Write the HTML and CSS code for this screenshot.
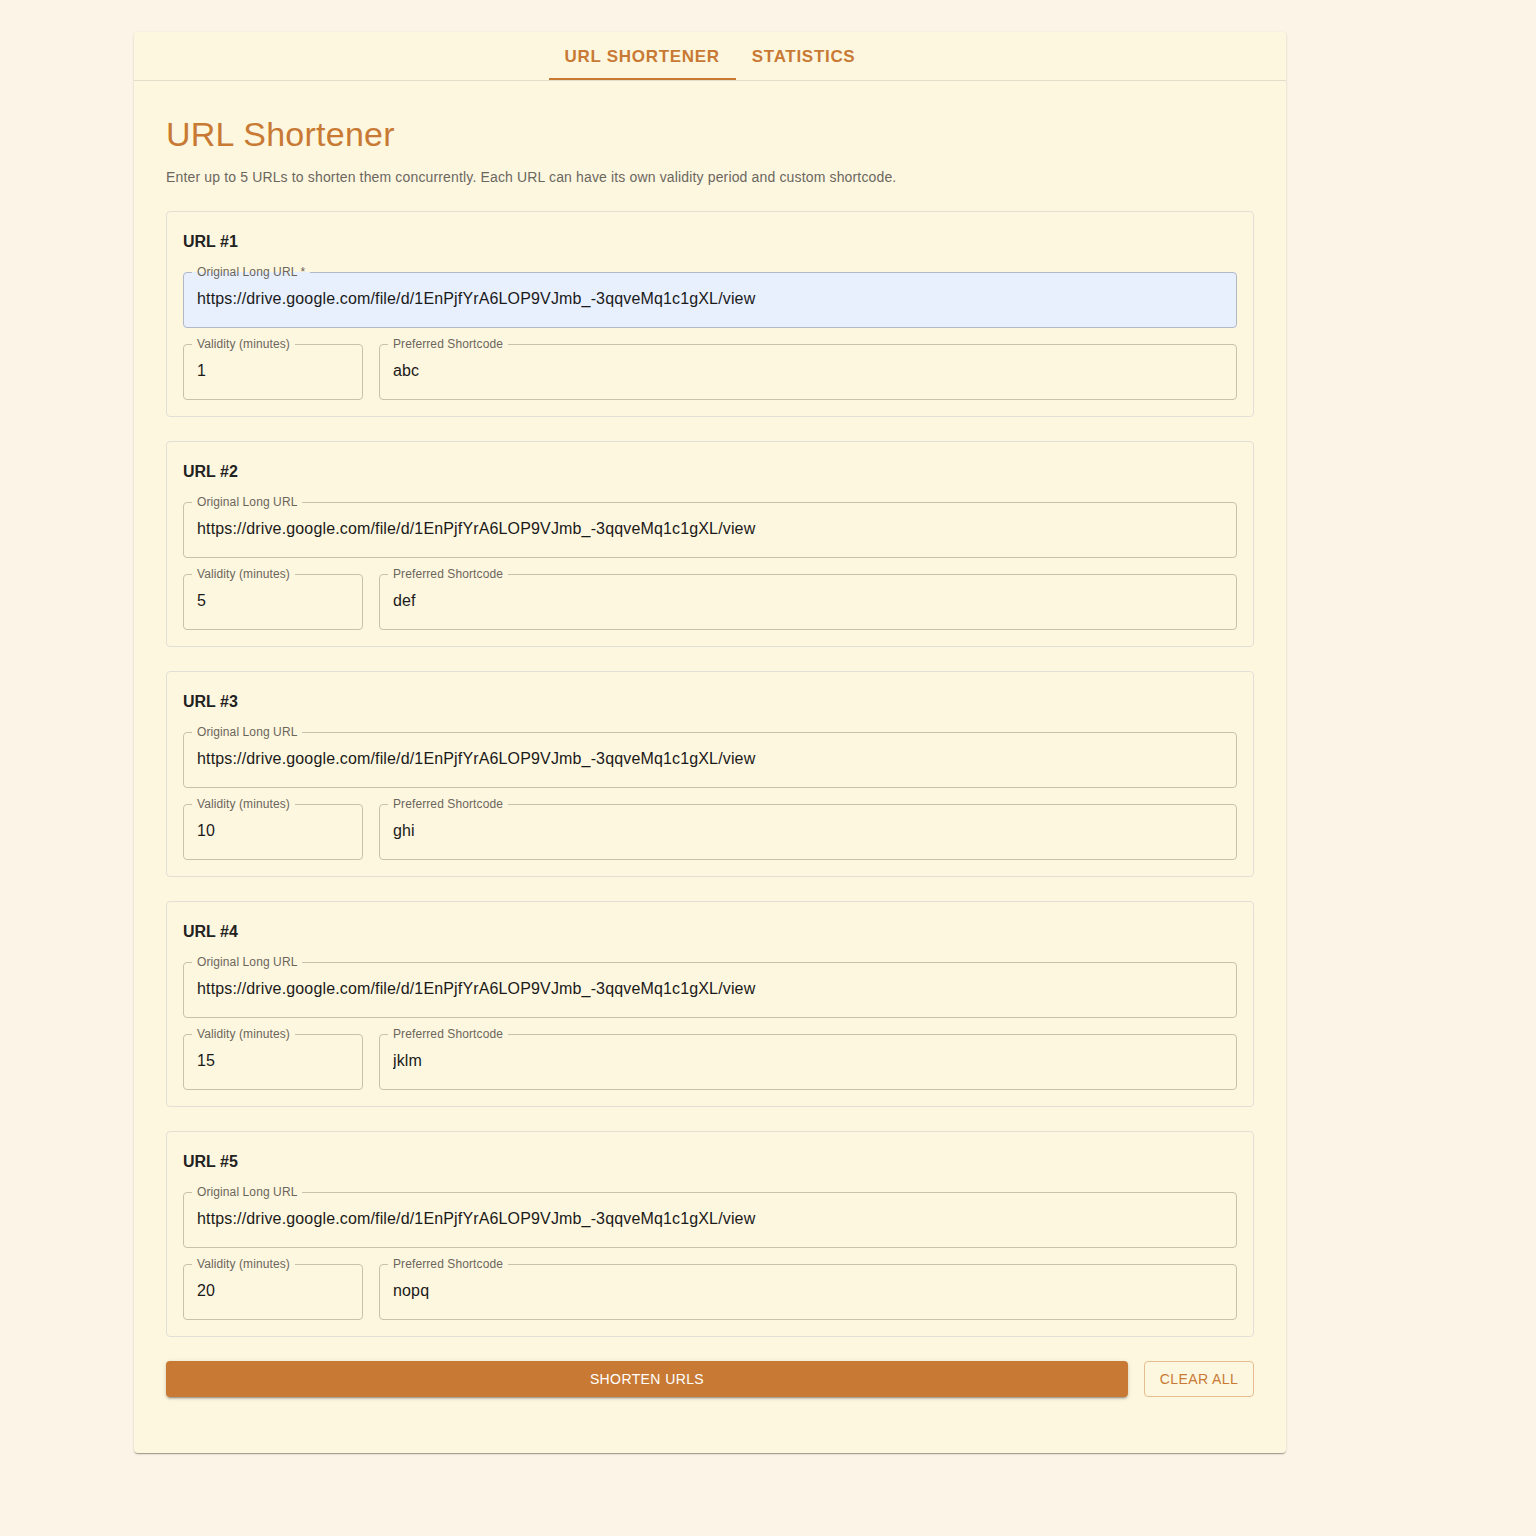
FILE: index.html
```html
<!DOCTYPE html>
<html lang="en">
<head>
<meta charset="utf-8">
<title>URL Shortener</title>
<link rel="stylesheet" href="styles.css">
</head>
<body>
<div class="page">
  <div class="card">
    <nav class="tabs">
      <div class="tab active">URL SHORTENER</div>
      <div class="tab">STATISTICS</div>
    </nav>
    <main class="content">
      <h1 class="title">URL Shortener</h1>
      <p class="desc">Enter up to 5 URLs to shorten them concurrently. Each URL can have its own validity period and custom shortcode.</p>

      <section class="entry">
        <h2 class="entry-title">URL #1</h2>
        <fieldset class="field autofill"><legend>Original Long URL *</legend><input class="input" value="https://drive.google.com/file/d/1EnPjfYrA6LOP9VJmb_-3qqveMq1c1gXL/view"></fieldset>
        <div class="row">
          <fieldset class="field small"><legend>Validity (minutes)</legend><input class="input" value="1"></fieldset>
          <fieldset class="field grow"><legend>Preferred Shortcode</legend><input class="input" value="abc"></fieldset>
        </div>
      </section>

      <section class="entry">
        <h2 class="entry-title">URL #2</h2>
        <fieldset class="field"><legend>Original Long URL</legend><input class="input" value="https://drive.google.com/file/d/1EnPjfYrA6LOP9VJmb_-3qqveMq1c1gXL/view"></fieldset>
        <div class="row">
          <fieldset class="field small"><legend>Validity (minutes)</legend><input class="input" value="5"></fieldset>
          <fieldset class="field grow"><legend>Preferred Shortcode</legend><input class="input" value="def"></fieldset>
        </div>
      </section>

      <section class="entry">
        <h2 class="entry-title">URL #3</h2>
        <fieldset class="field"><legend>Original Long URL</legend><input class="input" value="https://drive.google.com/file/d/1EnPjfYrA6LOP9VJmb_-3qqveMq1c1gXL/view"></fieldset>
        <div class="row">
          <fieldset class="field small"><legend>Validity (minutes)</legend><input class="input" value="10"></fieldset>
          <fieldset class="field grow"><legend>Preferred Shortcode</legend><input class="input" value="ghi"></fieldset>
        </div>
      </section>

      <section class="entry">
        <h2 class="entry-title">URL #4</h2>
        <fieldset class="field"><legend>Original Long URL</legend><input class="input" value="https://drive.google.com/file/d/1EnPjfYrA6LOP9VJmb_-3qqveMq1c1gXL/view"></fieldset>
        <div class="row">
          <fieldset class="field small"><legend>Validity (minutes)</legend><input class="input" value="15"></fieldset>
          <fieldset class="field grow"><legend>Preferred Shortcode</legend><input class="input" value="jklm"></fieldset>
        </div>
      </section>

      <section class="entry">
        <h2 class="entry-title">URL #5</h2>
        <fieldset class="field"><legend>Original Long URL</legend><input class="input" value="https://drive.google.com/file/d/1EnPjfYrA6LOP9VJmb_-3qqveMq1c1gXL/view"></fieldset>
        <div class="row">
          <fieldset class="field small"><legend>Validity (minutes)</legend><input class="input" value="20"></fieldset>
          <fieldset class="field grow"><legend>Preferred Shortcode</legend><input class="input" value="nopq"></fieldset>
        </div>
      </section>

      <div class="actions">
        <button class="btn primary">SHORTEN URLS</button>
        <button class="btn outline">CLEAR ALL</button>
      </div>
    </main>
  </div>
</div>
</body>
</html>
```

FILE: styles.css
```css
* { box-sizing: border-box; }
html, body { margin: 0; padding: 0; }
body {
  background: #fcf4e6;
  font-family: "Liberation Sans", Arial, sans-serif;
  color: rgba(0,0,0,0.87);
  min-height: 1536px;
}
.page {
  padding: 32px 0 0 134px;
}
.card {
  width: 1152px;
  background: #fef7df;
  border-radius: 4px;
  box-shadow: 0 2px 1px -1px rgba(0,0,0,0.2), 0 1px 1px 0 rgba(0,0,0,0.14), 0 1px 3px 0 rgba(0,0,0,0.12);
}
.tabs {
  display: flex;
  justify-content: center;
  height: 49px;
  border-bottom: 1px solid #e5dccb;
}
.tab {
  height: 48px;
  padding: 4px 16px 0;
  display: flex;
  align-items: center;
  font-size: 17px;
  font-weight: 700;
  letter-spacing: 0.7px;
  color: #c87a35;
  border-bottom: 2px solid transparent;
}
.tab.active { border-bottom-color: #c87a35; }
.content {
  padding: 32px 32px 56px;
}
.title {
  margin: 0;
  font-size: 34px;
  font-weight: 400;
  line-height: 42px;
  letter-spacing: 0.25px;
  color: #c87a35;
}
.desc {
  margin: 12px 0 24px;
  font-size: 14px;
  line-height: 20px;
  letter-spacing: 0.15px;
  color: #6b675f;
}
.entry {
  border: 1px solid #e2dfd6;
  border-radius: 4px;
  padding: 16px;
  margin-bottom: 24px;
}
.entry-title {
  margin: 0 0 11px;
  padding-top: 2px;
  font-size: 16px;
  font-weight: 700;
  line-height: 24px;
  color: #222;
}
.field {
  margin: 0;
  padding: 0 13px;
  min-width: 0;
  border: 1px solid #c9c1ae;
  border-radius: 4px;
  height: 63px;
}
.field legend {
  font-size: 12px;
  line-height: 14px;
  letter-spacing: 0.1px;
  color: #6b665c;
  padding: 0 5px;
  margin-left: -5px;
}
.field.autofill {
  background: #e8f0fe;
  border-color: #b2b8c6;
}
.input {
  display: block;
  width: 100%;
  border: 0;
  outline: 0;
  background: transparent;
  font-family: "Liberation Sans", Arial, sans-serif;
  font-size: 16px;
  letter-spacing: 0.15px;
  color: #1a1a1a;
  height: 39px;
  padding: 0;
}
.row {
  display: flex;
  gap: 16px;
  margin-top: 9px;
}
.field.small { width: 180px; flex: none; }
.field.grow { flex: 1; }
.actions {
  display: flex;
  gap: 16px;
  margin-top: 24px;
}
.btn {
  height: 36px;
  border-radius: 4px;
  font-family: "Liberation Sans", Arial, sans-serif;
  font-size: 14px;
  letter-spacing: 0.4px;
  cursor: pointer;
}
.btn.primary {
  flex: 1;
  background: #c87a35;
  color: #fff;
  border: 0;
  box-shadow: 0 3px 1px -2px rgba(0,0,0,0.2), 0 2px 2px 0 rgba(0,0,0,0.14), 0 1px 5px 0 rgba(0,0,0,0.12);
}
.btn.outline {
  width: 110px;
  background: transparent;
  color: #c87a35;
  border: 1px solid #e6bd8f;
}
```
